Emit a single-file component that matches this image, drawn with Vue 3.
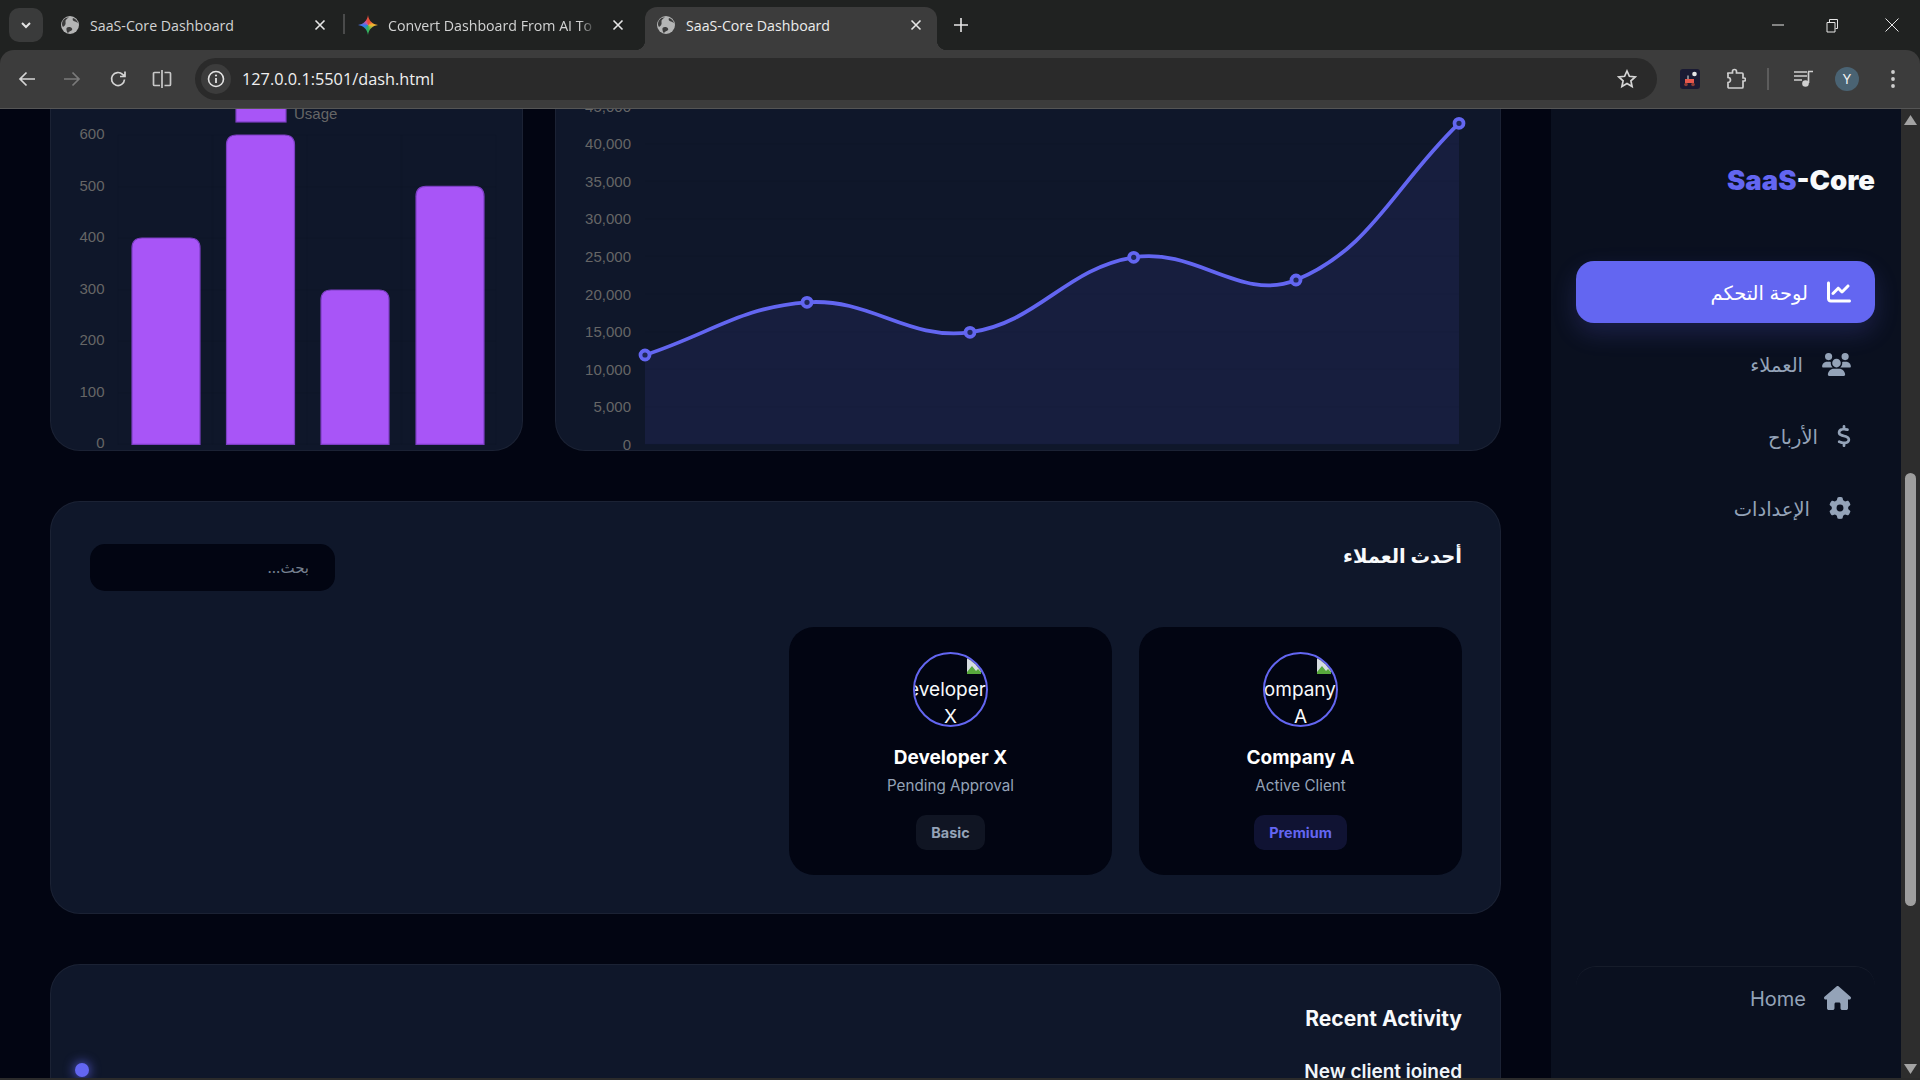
<template>
  <div class="window">
    <header class="tabstrip">
      <button class="tab-search">
        <svg width="14" height="14" viewBox="0 0 14 14"><path d="M3 5l4 4 4-4" fill="none" stroke="#e3e3e3" stroke-width="2" /></svg>
      </button>
      <div v-for="tab in tabs" :key="tab.id" class="tab" :class="{ active: tab.active, sep: tab.sep }">
        <span v-if="tab.gem" class="gem"></span>
        <svg v-else class="globe" width="18" height="18" viewBox="0 0 18 18">
          <circle cx="9" cy="9" r="9" fill="#b4b5b5" />
          <path d="M2 11c2-1 3-3 2.5-5S6 2.5 8 1.5C6 1 3.500 2 2 4.500S.8 9.500 2 11zM7 17c1-2 3-1.500 4-3s-1-3-3-3-3 1-2.500 3 .5 2 1.500 3zM12 2c-1 1.500 0 3 2 3.500s2.500 1.500 3 1.500c-.5-2-2.500-4.500-5-5z" fill="#3c3c3c" />
        </svg>
        <span class="tab-title">{{ tab.title }}</span>
        <svg class="tab-close" width="12" height="12" viewBox="0 0 12 12"><path d="M1.5 1.5l9 9m0-9l-9 9" stroke="#e6e6e6" stroke-width="1.6" /></svg>
      </div>
      <svg class="tab-plus" width="14" height="14" viewBox="0 0 14 14"><path d="M7 0v14M0 7h14" stroke="#e6e6e6" stroke-width="1.6" /></svg>
      <div class="win-controls">
        <span class="win-btn"><svg width="12" height="2" viewBox="0 0 12 2"><path d="M0 1h12" stroke="#e6e6e6" /></svg></span>
        <span class="win-btn"><svg width="13" height="15" viewBox="0 0 13 15"><path d="M1 4.5h8V14H1zM3.500 4V1.500h8v9H9.500" fill="none" stroke="#e6e6e6" /></svg></span>
        <span class="win-btn wide"><svg width="14" height="14" viewBox="0 0 14 14"><path d="M.5.5l13 13m0-13l-13 13" stroke="#e6e6e6" /></svg></span>
      </div>
    </header>

    <div class="toolbar">
      <span class="tool back"><svg width="18" height="18" viewBox="0 0 18 18"><path d="M17 9H2M8.500 2.500L2 9l6.500 6.500" fill="none" stroke="#d5d5d5" stroke-width="1.7" /></svg></span>
      <span class="tool"><svg width="18" height="18" viewBox="0 0 18 18"><path d="M1 9h15M9.500 2.500L16 9l-6.500 6.500" fill="none" stroke="#7a7a7a" stroke-width="1.7" /></svg></span>
      <span class="tool"><svg width="18" height="18" viewBox="0 0 18 18"><path d="M15.500 9.500a6.500 6.500 0 1 1-1.900-5.100L16 6.500M16 1.500v5h-5" fill="none" stroke="#d5d5d5" stroke-width="1.7" /></svg></span>
      <span class="tool narrow"><svg width="20" height="20" viewBox="0 0 20 20"><path d="M8 3.500H2.500a1 1 0 0 0-1 1v11a1 1 0 0 0 1 1H8M10 1v18M12.500 3.500h5a1 1 0 0 1 1 1v11a1 1 0 0 1-1 1h-5" fill="none" stroke="#c8c8c8" stroke-width="1.7" /></svg></span>
      <div class="address">
        <span class="site-info">
          <svg width="18" height="18" viewBox="0 0 18 18"><circle cx="9" cy="9" r="7.5" fill="none" stroke="#e3e3e3" stroke-width="1.6" /><path d="M9 8v5" stroke="#e3e3e3" stroke-width="1.8" /><circle cx="9" cy="5.5" r="1.1" fill="#e3e3e3" /></svg>
        </span>
        <span class="url">127.0.0.1:5501/dash.html</span>
        <svg class="star" width="20" height="20" viewBox="0 0 20 20"><path d="M10 2l2.400 5.300 5.800.6-4.300 3.900 1.200 5.700L10 14.600l-5.100 2.900 1.200-5.700-4.300-3.900 5.800-.6z" fill="none" stroke="#d5d5d5" stroke-width="1.7" /></svg>
      </div>
      <svg class="ext-robot" width="20" height="20" viewBox="0 0 20 20">
        <rect width="20" height="20" rx="3" fill="#1a1a33" />
        <circle cx="14.5" cy="5" r="2.3" fill="#e6e6e6" />
        <path d="M8 6.500v4" stroke="#e6e6e6" />
        <path d="M5 10h9v4H5z" fill="#e8584c" />
        <circle cx="6" cy="15.5" r="1.8" fill="#8c3b35" /><circle cx="13" cy="15.5" r="1.8" fill="#8c3b35" />
      </svg>
      <svg class="ext-puzzle" width="20" height="22" viewBox="0 0 20 22"><path d="M2 5h4.500V3.500a2 2 0 0 1 4 0V5H16a1 1 0 0 1 1 1v4h1a1.500 1.500 0 0 1 0 3h-1v6a1 1 0 0 1-1 1H3a1 1 0 0 1-1-1v-4.500a2.500 2.500 0 0 0 0-5V6a1 1 0 0 1 0-1z" fill="none" stroke="#cfcfcf" stroke-width="1.7" /></svg>
      <span class="tool-sep"></span>
      <svg class="media" width="20" height="18" viewBox="0 0 20 18"><path d="M0 2h13M0 6h13M0 10h8" stroke="#cfcfcf" stroke-width="1.7" /><path d="M14 1.500h5M14.500 1.500V13" fill="none" stroke="#cfcfcf" stroke-width="1.7" /><circle cx="11.5" cy="13.5" r="3.3" fill="#cfcfcf" /></svg>
      <span class="profile">Y</span>
      <svg class="dots" width="4" height="18" viewBox="0 0 4 18"><circle cx="2" cy="2" r="1.9" fill="#cfcfcf" /><circle cx="2" cy="9" r="1.9" fill="#cfcfcf" /><circle cx="2" cy="16" r="1.9" fill="#cfcfcf" /></svg>
    </div>

    <div class="viewport">
      <div class="page" dir="rtl">
        <aside class="sidebar">
          <div class="logo" dir="ltr"><span>SaaS</span>-Core</div>
          <nav class="nav">
            <a v-for="item in navItems" :key="item.label" class="nav-item" :class="{ active: item.active }">
              <svg class="nav-icon" :class="item.cls" :viewBox="item.box"><path :d="item.d" fill="currentColor" /></svg>
              <span>{{ item.label }}</span>
            </a>
          </nav>
          <a class="home-link">
            <svg class="nav-icon ic-home" :viewBox="homeIcon.box"><path :d="homeIcon.d" fill="currentColor" /></svg>
            <span>Home</span>
          </a>
        </aside>

        <main class="main">
          <section class="chart-row">
            <div class="card chart-card">
              <svg class="chart-svg" viewBox="556 69 944 381" preserveAspectRatio="xMinYMin meet">
                <text v-for="t in lineTicks" :key="t.label" x="631" :y="t.y + 5.5" class="tick" text-anchor="end">{{ t.label }}</text>
                <line v-for="t in lineTicks" :key="'g' + t.label" x1="645" x2="1459" :y1="t.y" :y2="t.y" class="grid" />
                <path :d="lineArea" fill="rgba(99, 102, 241, 0.1)" />
                <path :d="linePath" fill="none" stroke="#6366f1" stroke-width="3.8" />
                <circle v-for="p in linePoints" :key="p.x" :cx="p.x" :cy="p.y" r="4.5" fill="#1f2759" stroke="#6366f1" stroke-width="3.8" />
              </svg>
            </div>
            <div class="card chart-card">
              <svg class="chart-svg" viewBox="51 69 471 381" preserveAspectRatio="xMinYMin meet">
                <rect x="236" y="85" width="50" height="37" fill="#a855f7" stroke="#7c3fc4" stroke-width="1.2" />
                <text x="294" y="119" class="tick">Usage</text>
                <text v-for="t in barTicks" :key="t.label" x="104.5" :y="t.y + 4" class="tick" text-anchor="end">{{ t.label }}</text>
                <line v-for="t in barTicks" :key="'g' + t.label" x1="118" x2="496" :y1="t.y" :y2="t.y" class="grid" />
                <line v-for="x in barGridX" :key="x" :x1="x" :x2="x" y1="135" y2="444.3" class="grid" />
                <path v-for="bar in bars" :key="bar.x" :d="bar.d" fill="#a855f7" stroke="#7c3fc4" stroke-width="1.2" />
              </svg>
            </div>
          </section>

          <section class="card clients">
            <div class="clients-head">
              <h3>أحدث العملاء</h3>
              <div class="search">بحث...</div>
            </div>
            <div class="client-grid">
              <article v-for="client in clients" :key="client.name" class="client">
                <div class="avatar">
                  <svg class="broken" width="16" height="16" viewBox="0 0 16 16">
                    <path d="M1 0h9l5 5v11H1z" fill="#d5dbe0" />
                    <path d="M1 14l5-6 4 5 2-2 3 3v2H1z" fill="#58a83c" />
                    <path d="M10 0v5h5z" fill="#f2f4f6" />
                  </svg>
                  <div class="alt">{{ client.name }}</div>
                </div>
                <strong class="client-name">{{ client.name }}</strong>
                <span class="client-sub">{{ client.sub }}</span>
                <span class="badge" :class="client.plan.toLowerCase()">{{ client.plan }}</span>
              </article>
            </div>
          </section>

          <section class="card activity">
            <h3>Recent Activity</h3>
            <div class="activity-row">
              <strong>New client joined</strong>
              <span class="dot"></span>
            </div>
          </section>
        </main>
      </div>

      <div class="scrollbar">
        <svg class="arrow up" width="13" height="10" viewBox="0 0 13 10"><path d="M6.5 0L13 10H0z" fill="#a3a3a3" /></svg>
        <div class="thumb"></div>
        <svg class="arrow down" width="13" height="10" viewBox="0 0 13 10"><path d="M6.5 10L13 0H0z" fill="#a3a3a3" /></svg>
      </div>
    </div>
    <div class="bottom-edge"></div>
  </div>
</template>

<script setup>
const tabs = [
  { id: 1, title: 'SaaS-Core Dashboard', sep: true },
  { id: 2, title: 'Convert Dashboard From AI To Code', gem: true },
  { id: 3, title: 'SaaS-Core Dashboard', active: true }
]

const navItems = [
  {
    label: 'لوحة التحكم',
    active: true,
    cls: 'ic-chart',
    box: '0 0 512 512',
    d: 'M64 64c0-17.7-14.3-32-32-32S0 46.3 0 64V400c0 44.2 35.8 80 80 80H480c17.7 0 32-14.3 32-32s-14.3-32-32-32H80c-8.8 0-16-7.2-16-16V64zm406.6 86.6c12.5-12.5 12.5-32.8 0-45.3s-32.8-12.5-45.3 0L320 210.7l-57.4-57.4c-12.5-12.5-32.8-12.5-45.3 0l-112 112c-12.5 12.5-12.5 32.8 0 45.3s32.8 12.5 45.3 0L240 221.3l57.4 57.4c12.5 12.5 32.8 12.5 45.3 0l128-128z'
  },
  {
    label: 'العملاء',
    cls: 'ic-users',
    box: '0 0 640 512',
    d: 'M144 0a80 80 0 1 1 0 160A80 80 0 1 1 144 0zM512 0a80 80 0 1 1 0 160A80 80 0 1 1 512 0zM0 298.700C0 239.800 47.800 192 106.700 192h42.700c15.900 0 31 3.500 44.600 9.700c-1.300 7.200-1.900 14.700-1.900 22.300c0 38.200 16.800 72.500 43.300 96c-.2 0-.4 0-.7 0H21.300C9.600 320 0 310.400 0 298.700zM405.300 320c-.2 0-.4 0-.7 0c26.600-23.500 43.300-57.800 43.300-96c0-7.600-.7-15-1.900-22.300c13.600-6.300 28.700-9.700 44.600-9.700h42.700C592.200 192 640 239.800 640 298.700c0 11.800-9.600 21.300-21.300 21.300H405.300zM224 224a96 96 0 1 1 192 0 96 96 0 1 1-192 0zM128 485.300C128 411.700 187.700 352 261.300 352H378.700C452.300 352 512 411.700 512 485.300c0 14.700-11.900 26.700-26.700 26.700H154.700c-14.700 0-26.700-11.900-26.700-26.700z'
  },
  {
    label: 'الأرباح',
    cls: 'ic-dollar',
    box: '0 0 320 512',
    d: 'M160 0c17.700 0 32 14.300 32 32V67.700c1.600 .2 3.100 .4 4.700 .7c.4 .1 .7 .1 1.100 .2l48 8.800c17.400 3.200 28.900 19.900 25.700 37.200s-19.900 28.900-37.200 25.700l-47.500-8.700c-31.300-4.600-58.900-1.500-78.300 6.200s-27.200 18.300-29 28.100c-2 10.700-.5 16.700 1.200 20.400c1.800 3.900 5.500 8.300 12.800 13.200c16.300 10.700 41.300 17.700 73.700 26.300l2.900 .8c28.600 7.600 63.600 16.800 89.600 33.800c14.200 9.300 27.600 21.900 35.900 39.500c8.500 17.900 10.300 37.900 6.400 59.200c-6.900 38-33.100 63.400-65.600 76.700c-13.700 5.600-28.600 9.200-44.400 11V480c0 17.700-14.300 32-32 32s-32-14.300-32-32V445.100c-.4-.1-.9-.1-1.300-.2l-.2 0 0 0c-24.400-3.800-64.500-14.300-91.500-26.300c-16.100-7.200-23.400-26.100-16.200-42.200s26.100-23.400 42.200-16.200c20.900 9.300 55.300 18.500 75.200 21.600c31.900 4.700 58.200 2 76-5.300c16.900-6.900 24.600-16.900 26.800-28.900c1.900-10.600 .4-16.700-1.300-20.400c-1.900-4-5.600-8.400-13-13.300c-16.400-10.700-41.500-17.700-74-26.300l-2.800-.7 0 0C119.400 279.300 84.400 270 58.400 253c-14.200-9.300-27.500-22-35.800-39.600c-8.400-17.900-10.100-37.900-6.100-59.200C23.700 116 52.300 91.200 84.800 78.300c13.300-5.300 27.900-8.900 43.200-11V32c0-17.700 14.300-32 32-32z'
  },
  {
    label: 'الإعدادات',
    cls: 'ic-cog',
    box: '0 0 512 512',
    d: 'M495.900 166.600c3.200 8.700 .5 18.400-6.400 24.600l-43.300 39.400c1.100 8.300 1.700 16.800 1.700 25.400s-.6 17.100-1.700 25.400l43.300 39.400c6.900 6.200 9.600 15.900 6.400 24.600c-4.400 11.900-9.700 23.300-15.800 34.300l-4.700 8.100c-6.600 11-14 21.400-22.100 31.200c-5.900 7.200-15.700 9.600-24.500 6.800l-55.700-17.700c-13.400 10.300-28.200 18.900-44 25.400l-12.500 57.100c-2 9.100-9 16.300-18.200 17.800c-13.800 2.300-28 3.500-42.500 3.500s-28.700-1.200-42.500-3.500c-9.200-1.500-16.200-8.700-18.200-17.800l-12.500-57.100c-15.800-6.500-30.600-15.100-44-25.400L83.100 425.900c-8.800 2.800-18.600 .3-24.500-6.800c-8.100-9.800-15.500-20.200-22.100-31.200l-4.700-8.100c-6.100-11-11.400-22.400-15.800-34.300c-3.200-8.700-.5-18.400 6.400-24.600l43.300-39.400C64.600 273.100 64 264.600 64 256s.6-17.100 1.700-25.400L22.400 191.200c-6.900-6.200-9.600-15.900-6.400-24.600c4.400-11.900 9.700-23.300 15.800-34.300l4.700-8.100c6.600-11 14-21.400 22.100-31.200c5.900-7.200 15.700-9.600 24.500-6.800l55.700 17.700c13.400-10.300 28.200-18.900 44-25.400l12.500-57.100c2-9.100 9-16.300 18.200-17.800C227.300 1.200 241.500 0 256 0s28.700 1.200 42.500 3.500c9.200 1.500 16.200 8.700 18.200 17.800l12.500 57.100c15.800 6.500 30.600 15.100 44 25.400l55.700-17.700c8.800-2.800 18.600-.3 24.500 6.800c8.100 9.800 15.500 20.200 22.100 31.200l4.700 8.100c6.100 11 11.400 22.400 15.800 34.300zM256 336a80 80 0 1 0 0-160 80 80 0 1 0 0 160z'
  }
]

const homeIcon = {
  box: '0 0 576 512',
  d: 'M575.800 255.500c0 18-15 32.100-32 32.100h-32l.7 160.200c0 2.700-.2 5.400-.5 8.100V472c0 22.100-17.900 40-40 40H456c-1.100 0-2.200 0-3.300-.1c-1.400 .1-2.800 .1-4.200 .1H416 392c-22.100 0-40-17.900-40-40V448 384c0-17.700-14.300-32-32-32H256c-17.700 0-32 14.300-32 32v64 24c0 22.100-17.900 40-40 40H160 128.100c-1.500 0-3-.1-4.500-.2c-1.200 .1-2.400 .2-3.600 .2H104c-22.100 0-40-17.900-40-40V360c0-.9 0-1.900 .1-2.800V287.600H32c-18 0-32-14-32-32.100c0-9 3-17 10-24L266.400 8c7-7 15-8 22-8s15 2 21 7L564.800 231.500c8 7 12 15 11 24z'
}

const clients = [
  { name: 'Company A', sub: 'Active Client', plan: 'Premium' },
  { name: 'Developer X', sub: 'Pending Approval', plan: 'Basic' }
]

// chart geometry, in page pixels, as the canvases drew it
const BASE_Y = 444.3
const barTicks = [600, 500, 400, 300, 200, 100, 0].map((v) => ({ label: String(v), y: BASE_Y - v * 0.5155 }))
const barGridX = [118, 212.5, 307, 401.5, 496]

const bars = [
  { x: 132, top: 238 },
  { x: 226.5, top: 135 },
  { x: 321, top: 290 },
  { x: 416, top: 186.3 }
].map(({ x, top }) => {
  const w = 68
  const r = 10
  return {
    x,
    d: `M${x} ${BASE_Y}V${top + r}Q${x} ${top} ${x + r} ${top}H${x + w - r}Q${x + w} ${top} ${x + w} ${top + r}V${BASE_Y}Z`
  }
})

const lineTicks = [45, 40, 35, 30, 25, 20, 15, 10, 5, 0].map((v) => ({
  label: v === 0 ? '0' : `${v},000`,
  y: BASE_Y - v * 7.515
}))

const linePoints = [
  { x: 645, y: 355 },
  { x: 807, y: 302.3 },
  { x: 970, y: 332.3 },
  { x: 1133.7, y: 257.3 },
  { x: 1296, y: 280 },
  { x: 1459, y: 123.3 }
]

// same spline the chart library uses for tension 0.4
function splinePath(pts, t = 0.4) {
  const ctrl = pts.map((p, i) => {
    const prev = pts[i - 1] || p
    const next = pts[i + 1] || p
    const d01 = Math.hypot(p.x - prev.x, p.y - prev.y)
    const d12 = Math.hypot(next.x - p.x, next.y - p.y)
    const sum = d01 + d12 || 1
    const dx = next.x - prev.x
    const dy = next.y - prev.y
    return {
      px: p.x - (t * d01 * dx) / sum,
      py: p.y - (t * d01 * dy) / sum,
      nx: p.x + (t * d12 * dx) / sum,
      ny: p.y + (t * d12 * dy) / sum
    }
  })
  let d = `M${pts[0].x} ${pts[0].y}`
  for (let i = 1; i < pts.length; i++) {
    d += `C${ctrl[i - 1].nx} ${ctrl[i - 1].ny} ${ctrl[i].px} ${ctrl[i].py} ${pts[i].x} ${pts[i].y}`
  }
  return d
}

const linePath = splinePath(linePoints)
const lineArea = `${linePath}V${BASE_Y}H${linePoints[0].x}Z`
</script>

<style scoped>
.window {
  width: 1920px;
  height: 1080px;
  display: flex;
  flex-direction: column;
  overflow: hidden;
  background: #202221;
  font-family: "Inter", "DejaVu Sans", sans-serif;
}

.tabstrip {
  height: 50px;
  flex: none;
  display: flex;
  align-items: flex-end;
  padding-left: 9px;
  box-sizing: border-box;
}

.tab-search {
  width: 34px;
  height: 34px;
  margin: 0 6px 8px 0;
  padding: 0;
  border: 0;
  border-radius: 10px;
  background: #3a3b3b;
  display: grid;
  place-items: center;
}

.tab {
  position: relative;
  width: 292px;
  height: 43px;
  margin-right: 6px;
  padding: 0 15px 7px 12px;
  box-sizing: border-box;
  display: flex;
  align-items: center;
  color: #d2d3d3;
  font-family: "Open Sans", sans-serif;
  font-size: 14.2px;
  border-radius: 12px 12px 0 0;
}

.tab.active {
  background: #3c3c3c;
  color: #ececec;
}

.tab.active::before,
.tab.active::after {
  content: "";
  position: absolute;
  bottom: 0;
  width: 10px;
  height: 10px;
}

.tab.active::before {
  left: -10px;
  background: radial-gradient(circle at 0 0, transparent 10px, #3c3c3c 10.5px);
}

.tab.active::after {
  right: -10px;
  background: radial-gradient(circle at 100% 0, transparent 10px, #3c3c3c 10.5px);
}

.tab.sep::after {
  content: "";
  position: absolute;
  right: -4px;
  top: 7px;
  width: 2px;
  height: 20px;
  background: #4a4b4b;
}

.globe {
  flex: none;
  margin-right: 11px;
}

.gem {
  flex: none;
  width: 20px;
  height: 20px;
  margin: 0 10px 0 -1px;
  background: conic-gradient(#ea4f36 0 10%, #f6b92f 25%, #2fb45a 50%, #2d7bf5 72%, #d155a5 90%, #ea4f36);
  clip-path: path("M10 0C10.600 5.500 14.500 9.400 20 10C14.500 10.600 10.600 14.500 10 20C9.400 14.500 5.500 10.600 0 10C5.500 9.400 9.400 5.500 10 0Z");
}

.tab-title {
  flex: 1;
  min-width: 0;
  white-space: nowrap;
  overflow: hidden;
  margin-right: 8px;
}

.tab:nth-of-type(2) .tab-title {
  -webkit-mask-image: linear-gradient(90deg, #000 192px, transparent 208px);
  mask-image: linear-gradient(90deg, #000 192px, transparent 208px);
}

.tab-close {
  flex: none;
}

.tab-plus {
  margin: 0 0 18px 11px;
}

.win-controls {
  margin-left: auto;
  display: flex;
  align-self: stretch;
}

.win-btn {
  width: 55px;
  display: grid;
  place-items: center;
}

.win-btn.wide {
  width: 60px;
  padding-left: 3px;
  box-sizing: border-box;
}

.toolbar {
  height: 59px;
  flex: none;
  box-sizing: border-box;
  display: flex;
  align-items: center;
  padding: 0 0 1px 3px;
  background: #3c3c3c;
  border-bottom: 1px solid #555;
  border-radius: 14px 14px 0 0;
}

.tool {
  width: 46px;
  display: grid;
  place-items: center;
}

.tool.back svg {
  margin-left: 2px;
}

.tool.narrow {
  width: 42px;
}

.address {
  flex: none;
  width: 1462px;
  height: 42px;
  margin-left: 12px;
  padding: 0 20px 0 6px;
  box-sizing: border-box;
  display: flex;
  align-items: center;
  border-radius: 21px;
  background: #2a2a2a;
}

.site-info {
  width: 30px;
  height: 30px;
  border-radius: 50%;
  background: #3c3c3c;
  display: grid;
  place-items: center;
}

.url {
  margin-left: 11px;
  color: #f0f0f0;
  font-family: "Open Sans", sans-serif;
  font-size: 16.3px;
}

.star {
  margin-left: auto;
}

.ext-robot { margin-left: 23px; }
.ext-puzzle { margin-left: 26px; }

.tool-sep {
  width: 2px;
  height: 22px;
  margin-left: 21px;
  background: #5c5c5c;
}

.media { margin-left: 25px; }

.profile {
  width: 24px;
  height: 24px;
  margin-left: 21px;
  border-radius: 50%;
  background: #4a6373;
  color: #f2f2f2;
  font-size: 13px;
  display: grid;
  place-items: center;
}

.dots { margin-left: 32px; }

.viewport {
  flex: 1;
  min-height: 0;
  display: flex;
}

.page {
  flex: 1;
  min-width: 0;
  display: flex;
  background: #020512;
}

.sidebar {
  width: 350px;
  flex: none;
  box-sizing: border-box;
  padding: 53px 26px 0 25px;
  display: flex;
  flex-direction: column;
  background: #0a101f;
}

.logo {
  font-size: 27.5px;
  line-height: 36px;
  font-weight: 900;
  color: #f8fafc;
  text-align: right;
}

.logo span {
  color: #6366f1;
}

.nav {
  margin-top: 63px;
  display: flex;
  flex-direction: column;
  gap: 10px;
}

.nav-item {
  height: 62px;
  padding: 0 24px;
  display: flex;
  align-items: center;
  gap: 19px;
  border-radius: 18px;
  color: #94a3b8;
  font-size: 19.5px;
}

.nav-item span {
  padding-top: 2px;
}

.nav-item.active {
  background: #6366f1;
  color: #fff;
  box-shadow: 0 10px 25px rgba(99, 102, 241, 0.2);
}

.nav-icon {
  flex: none;
  display: block;
}

.ic-chart { width: 24px; height: 24px; }
.ic-users { width: 29px; height: 23px; }
.ic-dollar { width: 14px; height: 22px; }
.ic-cog { width: 22px; height: 22px; }
.ic-home { width: 27px; height: 24px; }

.home-link {
  margin-top: auto;
  height: 112px;
  padding: 17px 24px 0;
  box-sizing: border-box;
  display: flex;
  align-items: flex-start;
  gap: 18px;
  border-top: 1px solid rgba(255, 255, 255, 0.05);
  border-radius: 20px 20px 0 0;
  color: #94a3b8;
  font-size: 20px;
  line-height: 30px;
}

.home-link .nav-icon {
  margin-top: 2px;
}

.main {
  flex: 1;
  min-width: 0;
  padding: 0 50px;
  overflow: hidden;
  display: flex;
  flex-direction: column;
  gap: 50px;
}

.card {
  flex: none;
  box-sizing: border-box;
  border: 1px solid rgba(255, 255, 255, 0.05);
  border-radius: 30px;
  background: #0f172a;
}

.chart-row {
  flex: none;
  margin-top: -41px;
  display: grid;
  grid-template-columns: 2fr 1fr;
  gap: 32px;
}

.chart-card {
  height: 383px;
  overflow: hidden;
}

.chart-svg {
  display: block;
  width: 100%;
  height: 381px;
  direction: ltr;
}

.tick {
  font-family: "Liberation Sans", sans-serif;
  font-size: 15px;
  fill: #666;
}

.grid {
  stroke: rgba(0, 0, 0, 0.04);
  stroke-width: 1.2;
}

.clients {
  height: 413px;
  padding: 41px 38px 0;
}

.clients-head {
  height: 48px;
  display: flex;
  justify-content: space-between;
  align-items: flex-start;
}

h3 {
  margin: 0;
  color: #f8fafc;
  font-size: 19.5px;
  font-weight: 700;
  line-height: 26px;
}

.search {
  width: 245px;
  height: 47px;
  margin: 1px 1px 0 0;
  margin-left: 1px;
  padding: 0 26px;
  box-sizing: border-box;
  border-radius: 15px;
  background: #020512;
  color: #76808f;
  font-size: 15px;
  line-height: 47px;
}

.client-grid {
  margin-top: 36px;
  display: grid;
  grid-template-columns: repeat(auto-fill, minmax(300px, 1fr));
  gap: 27px;
}

.client {
  height: 248px;
  padding-top: 25px;
  box-sizing: border-box;
  border-radius: 25px;
  background: #020512;
  display: flex;
  flex-direction: column;
  align-items: center;
}

.avatar {
  width: 75px;
  height: 75px;
  flex: none;
  box-sizing: border-box;
  border: 2px solid #6366f1;
  border-radius: 50%;
  overflow: hidden;
  color: #f8fafc;
  font-size: 19px;
  line-height: 27px;
}

.broken {
  display: block;
  margin: 4px 4px 2px auto;
}

.alt {
  text-align: center;
}

.client-name {
  margin-top: 17px;
  color: #fff;
  font-size: 19px;
  line-height: 28px;
  font-weight: 700;
}

.client-sub {
  margin-top: 2px;
  color: #94a3b8;
  font-size: 15.2px;
  line-height: 24px;
}

.badge {
  margin-top: 17px;
  height: 35px;
  padding: 0 15px;
  border-radius: 10px;
  font-size: 14.4px;
  font-weight: 700;
  line-height: 35px;
}

.badge.basic {
  background: rgba(148, 163, 184, 0.1);
  color: #94a3b8;
}

.badge.premium {
  background: rgba(99, 102, 241, 0.15);
  color: #6366f1;
}

.activity {
  height: 200px;
  padding: 39px 38px 0 39px;
}

.activity h3 {
  font-size: 21px;
  line-height: 30px;
}

.activity-row {
  margin-top: 26px;
  display: flex;
  justify-content: space-between;
  color: #f1f5f9;
  font-size: 19px;
  line-height: 24px;
}

.activity-row strong {
  font-weight: 600;
}

.dot {
  width: 14px;
  height: 14px;
  margin: 3px 0 0 -15px;
  border-radius: 50%;
  background: #6366f1;
  box-shadow: 0 0 12px #6366f1;
}

.scrollbar {
  width: 19px;
  flex: none;
  display: flex;
  flex-direction: column;
  align-items: center;
  background: #2d2d2d;
}

.arrow.up {
  margin-top: 6px;
}

.thumb {
  width: 11px;
  height: 433px;
  margin-top: 348px;
  border-radius: 6px;
  background: #9e9e9e;
}

.arrow.down {
  margin-top: auto;
  margin-bottom: 4px;
}

.bottom-edge {
  height: 2px;
  flex: none;
  background: #2b2b2b;
}
</style>

<style>
html,
body {
  margin: 0;
  background: #020512;
}
</style>
